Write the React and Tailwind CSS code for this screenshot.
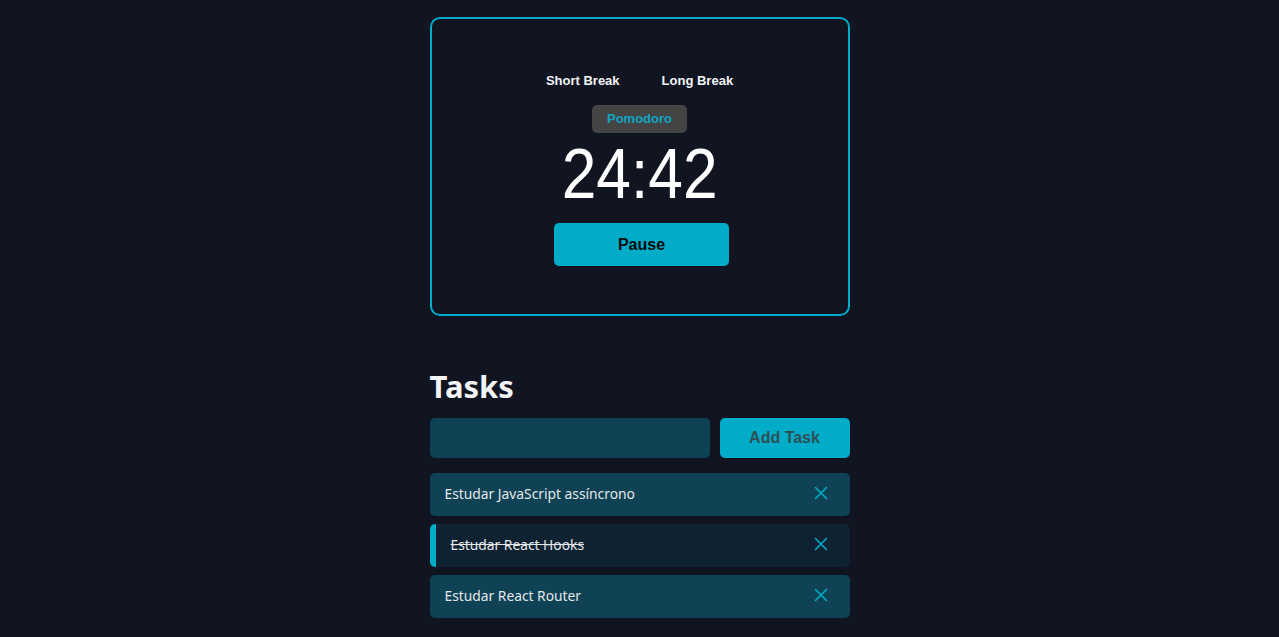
import { useState } from "react";

const initialTasks = [
  { id: 1, text: "Estudar JavaScript assíncrono", done: false },
  { id: 2, text: "Estudar React Hooks", done: true },
  { id: 3, text: "Estudar React Router", done: false },
];

function CloseIcon() {
  return (
    <svg width="14" height="14" viewBox="0 0 14 14" fill="none" stroke="currentColor" strokeWidth="1.6" strokeLinecap="round">
      <path d="M1.5 1.5l11 11M12.5 1.5l-11 11" />
    </svg>
  );
}

export default function App() {
  const [tasks, setTasks] = useState(initialTasks);
  const [draft, setDraft] = useState("");

  const addTask = () => {
    if (!draft.trim()) return;
    setTasks([...tasks, { id: Date.now(), text: draft, done: false }]);
    setDraft("");
  };

  return (
    <div className="min-h-[637px] bg-[#111522] flex justify-center">
      <div className="w-[420px] pt-[17px]">
        <section className="h-[299px] rounded-[10px] border-2 border-[#00acc8] flex flex-col items-center pt-[54px] font-['Liberation_Sans',sans-serif]">
          <div className="flex gap-[42px] text-[13px] font-bold text-[#f3f4f6] leading-4">
            <button>Short Break</button>
            <button>Long Break</button>
          </div>
          <button className="mt-[16px] w-[95px] h-[28px] rounded-[5px] bg-[#444444] text-[13px] font-bold text-[#0ea5c0]">
            Pomodoro
          </button>
          <div className="mt-[2px] text-[70px] leading-[78px] text-white scale-x-[0.89]">
            24:42
          </div>
          <button className="mt-[10px] ml-[4px] w-[175px] h-[43px] rounded-[5px] bg-[#00acc8] text-[16px] font-bold text-[#0a0a0a]">
            Pause
          </button>
        </section>

        <section className="mt-[53px] font-['Noto_Sans',sans-serif]">
          <h2 className="text-[31px] leading-[34px] font-bold text-[#f3f4f6]">Tasks</h2>
          <div className="mt-[15px] flex gap-[10px]">
            <input
              value={draft}
              onChange={(e) => setDraft(e.target.value)}
              className="w-[280px] h-[40px] rounded-[5px] bg-[#0e4254] px-3 text-white outline-none"
            />
            <button
              onClick={addTask}
              className="flex-1 h-[40px] rounded-[5px] bg-[#00acc8] text-[16px] font-bold text-[#2f4f55] font-['Liberation_Sans',sans-serif]"
            >
              Add Task
            </button>
          </div>
          <ul className="mt-[15px] flex flex-col gap-[8px]">
            {tasks.map((task) => (
              <li
                key={task.id}
                className={
                  task.done
                    ? "h-[43px] rounded-[5px] bg-[#0f2231] border-l-[6px] border-[#00acc8] flex items-center justify-between pl-[15px] pr-[22px]"
                    : "h-[43px] rounded-[5px] bg-[#0e4254] flex items-center justify-between pl-[15px] pr-[22px]"
                }
              >
                <span
                  className={
                    task.done
                      ? "text-[13.8px] text-[#e5e7eb] line-through"
                      : "text-[13.8px] text-[#e5e7eb]"
                  }
                >
                  {task.text}
                </span>
                <button
                  onClick={() => setTasks(tasks.filter((t) => t.id !== task.id))}
                  className="text-[#00acc8] -mt-[4px]"
                >
                  <CloseIcon />
                </button>
              </li>
            ))}
          </ul>
        </section>
      </div>
    </div>
  );
}
